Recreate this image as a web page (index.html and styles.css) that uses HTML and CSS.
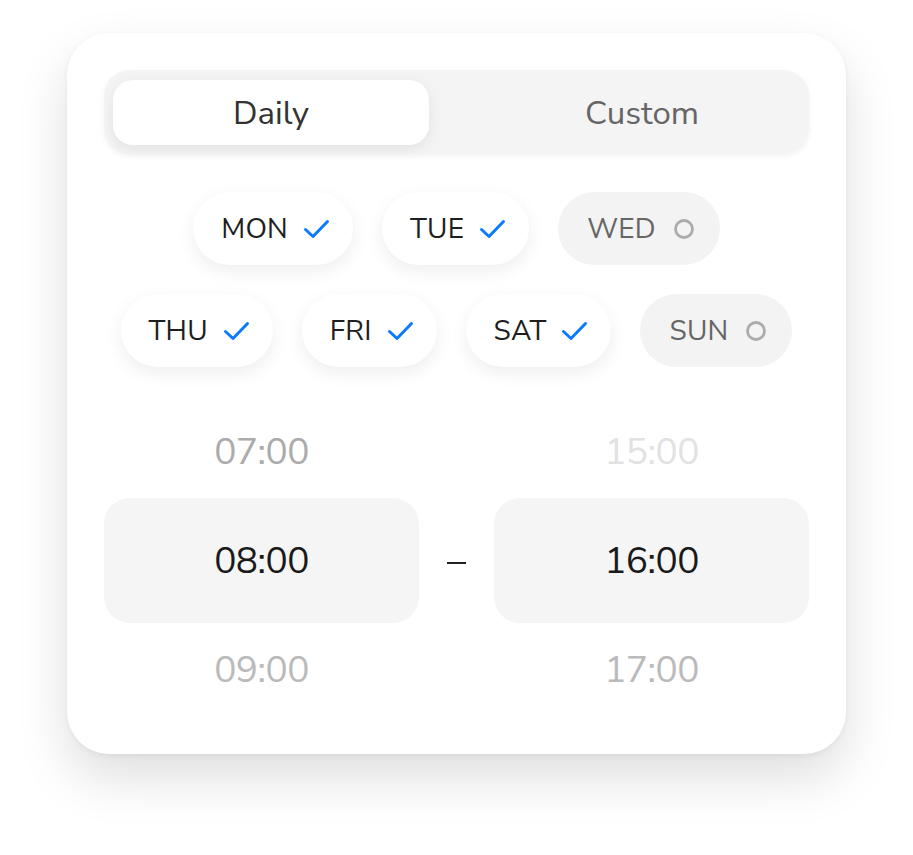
FILE: index.html
```html
<!DOCTYPE html>
<html lang="en">
<head>
<meta charset="utf-8">
<title>Schedule</title>
<link rel="stylesheet" href="styles.css">
</head>
<body>
<div class="card">
  <div class="segmented">
    <div class="seg seg-active">Daily</div>
    <div class="seg">Custom</div>
  </div>

  <div class="days">
    <div class="day-row">
      <div class="chip on">MON <svg class="ico" viewBox="0 0 26 20"><path d="M2 10.5 L9.5 17.5 L24 2.5"/></svg></div>
      <div class="chip on">TUE <svg class="ico" viewBox="0 0 26 20"><path d="M2 10.5 L9.5 17.5 L24 2.5"/></svg></div>
      <div class="chip off">WED <svg class="dot" viewBox="0 0 20 20"><circle cx="10" cy="10" r="8.5"/></svg></div>
    </div>
    <div class="day-row">
      <div class="chip on">THU <svg class="ico" viewBox="0 0 26 20"><path d="M2 10.5 L9.5 17.5 L24 2.5"/></svg></div>
      <div class="chip on">FRI <svg class="ico" viewBox="0 0 26 20"><path d="M2 10.5 L9.5 17.5 L24 2.5"/></svg></div>
      <div class="chip on">SAT <svg class="ico" viewBox="0 0 26 20"><path d="M2 10.5 L9.5 17.5 L24 2.5"/></svg></div>
      <div class="chip off">SUN <svg class="dot" viewBox="0 0 20 20"><circle cx="10" cy="10" r="8.5"/></svg></div>
    </div>
  </div>

  <div class="times">
    <div class="col">
      <div class="t t-near">07:00</div>
      <div class="t-box">08:00</div>
      <div class="t t-near2">09:00</div>
    </div>
    <div class="dash"><span class="dash-bar"></span></div>
    <div class="col">
      <div class="t t-far">15:00</div>
      <div class="t-box">16:00</div>
      <div class="t t-near2">17:00</div>
    </div>
  </div>
</div>
</body>
</html>
```

FILE: styles.css
```css
* { box-sizing: border-box; }
html, body { margin: 0; padding: 0; background: #ffffff; }
body {
  font-family: "Nunito Sans", Lato, "Noto Sans", sans-serif;
  width: 913px;
  height: 855px;
  padding-top: 33px;
  padding-left: 67px;
}
.card {
  width: 779px;
  height: 721px;
  background: #fff;
  border-radius: 42px;
  padding: 37px 37px 0 37px;
  box-shadow: 0 24px 52px rgba(0,0,0,0.13), 0 2px 6px rgba(0,0,0,0.05);
}
.segmented {
  display: flex;
  justify-content: space-between;
  height: 84px;
  padding: 10px 9px 9px 9px;
  background: #f4f4f4;
  border-radius: 26px;
  box-shadow: 0 2px 6px rgba(0,0,0,0.05);
}
.seg {
  width: 316px;
  display: flex;
  align-items: center;
  justify-content: center;
  font-size: 33px;
  color: #666;
  border-radius: 20px;
  padding-top: 1px;
}
.seg-active {
  background: #fff;
  color: #333;
  box-shadow: 0 4px 14px rgba(0,0,0,0.08);
}
.days {
  margin-top: 38px;
  display: flex;
  flex-direction: column;
  gap: 29px;
}
.day-row {
  display: flex;
  justify-content: center;
  gap: 29px;
}
.chip {
  height: 73px;
  border-radius: 37px;
  display: flex;
  align-items: center;
  padding: 0 23px 0 28px;
  gap: 15px;
  font-size: 28px;
  letter-spacing: 0.2px;
}
.chip.on {
  background: #fff;
  color: #1e1e1e;
  box-shadow: 0 6px 18px rgba(0,0,0,0.07);
}
.chip.off {
  background: #f3f3f3;
  color: #666;
  padding: 0 26px 0 29px;
  gap: 18px;
}
.ico {
  width: 27px;
  height: 20px;
  fill: none;
  stroke: #0a7aff;
  stroke-width: 3;
  stroke-linecap: round;
  stroke-linejoin: round;
}
.dot {
  width: 20px;
  height: 20px;
  fill: none;
  stroke: #ababab;
  stroke-width: 2.8;
}
.times {
  margin-top: 60px;
  display: flex;
}
.col {
  width: 315px;
  display: flex;
  flex-direction: column;
  align-items: stretch;
}
.t {
  height: 50px;
  display: flex;
  align-items: center;
  justify-content: center;
  font-size: 37px;
  letter-spacing: -0.5px;
}
.t-near { color: #ababab; margin-bottom: 21px; }
.t-far { color: #e2e2e2; margin-bottom: 21px; }
.t-near2 { color: #bababa; margin-top: 22px; }
.t-box {
  height: 125px;
  background: #f5f5f5;
  border-radius: 26px;
  display: flex;
  align-items: center;
  justify-content: center;
  font-size: 37px;
  color: #1a1a1a;
  letter-spacing: -0.5px;
}
.dash {
  width: 75px;
  display: flex;
  align-items: center;
  justify-content: center;
  padding-top: 3px;
}
.dash-bar {
  display: block;
  width: 19px;
  height: 2px;
  background: #222;
}
```
